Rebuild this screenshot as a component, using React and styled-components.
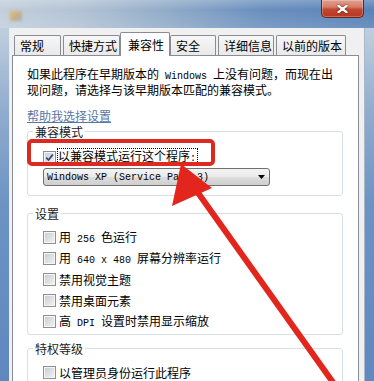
import React from 'react';
import styled, { createGlobalStyle } from 'styled-components';

const GlobalStyle = createGlobalStyle`
  html, body {
    margin: 0;
    padding: 0;
    background: #fff;
  }
  body {
    font-family: "Noto Sans CJK SC", "Noto Sans", sans-serif;
    font-size: 12px;
    color: #000;
  }
`;

const tabs = [
  { label: '常规', width: 47 },
  { label: '快捷方式', width: 57 },
  { label: '兼容性', width: 50, active: true },
  { label: '安全', width: 46 },
  { label: '详细信息', width: 56 },
  { label: '以前的版本', width: 70 },
];

const Screen = styled.div`
  position: relative;
  width: 374px;
  height: 381px;
  overflow: hidden;
  display: flex;
  flex-direction: column;
`;

const TitleBar = styled.div`
  height: 28px;
  flex: none;
  display: flex;
  align-items: flex-start;
  justify-content: space-between;
  background:
    linear-gradient(180deg, rgba(255, 255, 255, 0.22) 0%, rgba(255, 255, 255, 0) 35%, rgba(255, 255, 255, 0.12) 100%),
    linear-gradient(90deg, #c3cfdc 0%, #b2c2d4 22%, #90abc9 45%, #6a8fbd 70%, #5882b7 100%);
`;

const AppIcon = styled.span`
  width: 12px;
  height: 10px;
  margin: 11px 0 0 10px;
  background: linear-gradient(135deg, #e6c06a, #bfae8c 60%, #a2b6cc);
  filter: blur(1.5px);
`;

const CloseButton = styled.div`
  box-sizing: border-box;
  width: 43px;
  height: 18px;
  margin-right: 10px;
  border: 1px solid #6b2418;
  border-top: none;
  border-radius: 0 0 5px 5px;
  background: linear-gradient(180deg, #e2a090 0%, #d57f6c 40%, #c3472f 55%, #b53723 100%);
  box-shadow: inset 0 0 0 1px rgba(255, 255, 255, 0.25);
  display: flex;
  align-items: center;
  justify-content: center;

  svg {
    width: 11px;
    height: 8px;
    filter: drop-shadow(0 0 1px rgba(60, 10, 0, 0.8));
  }
`;

const Body = styled.div`
  flex: 1;
  min-height: 0;
  display: flex;
`;

const Frame = styled.div`
  width: 9px;
  flex: none;
  background: linear-gradient(180deg, #c0cfdf 0%, #93aece 22%, #6c93c3 50%, #5e88bf 100%);
`;

const Dialog = styled.div`
  flex: 1;
  min-width: 0;
  display: flex;
  flex-direction: column;
  background: #f0f0f0;
  border-left: 1px solid #e9eef4;
  border-right: 1px solid #a9b8c9;
  padding: 0 5px 0 2px;
`;

const TabRow = styled.div`
  display: flex;
  align-items: flex-end;
  gap: 2px;
  padding: 4px 0 0 2px;
`;

const Tab = styled.div`
  box-sizing: border-box;
  position: relative;
  z-index: ${(p) => (p.$active ? 1 : 0)};
  width: ${(p) => p.$w}px;
  height: ${(p) => (p.$active ? 24 : 20)}px;
  margin: ${(p) => (p.$active ? '0 -2px -1px' : '0')};
  padding-left: ${(p) => (p.$active ? 7 : 5)}px;
  border: 1px solid #898c95;
  border-bottom: none;
  border-radius: 2px 2px 0 0;
  background: ${(p) => (p.$active ? '#fff' : 'linear-gradient(180deg, #f7f7f7, #e9e9e9)')};
  display: flex;
  align-items: center;
  line-height: 13px;
  white-space: nowrap;
`;

const Panel = styled.div`
  flex: 1;
  background: #fff;
  border: 1px solid #898c95;
  border-bottom: none;
  padding: 11px 15px 0 14px;
`;

const Intro = styled.p`
  margin: 0;
  line-height: 13px;
  white-space: nowrap;
`;

const Mono = styled.span`
  font-family: "Liberation Mono", "DejaVu Sans Mono", monospace;
  font-size: 10px;
  white-space: pre;
`;

const HelpLink = styled.a`
  display: block;
  width: max-content;
  margin-top: 13px;
  line-height: 13px;
  color: #5877a5;
  text-decoration: underline;
`;

const Group = styled.fieldset`
  position: relative;
  min-width: 0;
  margin: ${(p) => p.$top}px 0 0;
  padding: ${(p) => p.$padTop}px 0 ${(p) => p.$padBottom}px 5px;
  border: 1px solid #d5dfe5;
  border-radius: 3px;
`;

const Legend = styled.legend`
  margin: 0;
  padding: 0 2px;
  line-height: 13px;
  color: #1a1a1a;
`;

const GroupBody = styled.div`
  padding-left: 10px;
`;

const CheckRow = styled.div`
  display: flex;
  align-items: center;
  gap: 2px;
  height: ${(p) => p.$h || 21}px;
  line-height: 13px;
  white-space: nowrap;
`;

const Box = styled.span`
  box-sizing: border-box;
  width: 13px;
  height: 13px;
  flex: none;
  border: 1px solid #8e8f8f;
  background: linear-gradient(135deg, #c6cad0 0%, #dfe1e4 55%, #f4f4f4 100%);
  box-shadow: inset 0 0 0 1px #f6f6f6;
  display: flex;
  align-items: center;
  justify-content: center;

  svg {
    width: 9px;
    height: 9px;
  }
`;

const Caption = styled.span`
  border: 1px dotted ${(p) => (p.$focus ? '#000' : 'transparent')};
  padding: 0 1px 0 0;
  margin-left: ${(p) => (p.$focus ? -1 : 0)}px;
`;

const Select = styled.div`
  box-sizing: border-box;
  width: 227px;
  height: 18px;
  margin-top: 3px;
  padding: 0 4px 0 3px;
  border: 1px solid #707070;
  border-radius: 3px;
  background: linear-gradient(180deg, #f3f3f3 0%, #ebebeb 50%, #dddddd 51%, #cfcfcf 100%);
  display: flex;
  align-items: center;
  justify-content: space-between;

  svg {
    width: 7px;
    height: 4px;
  }
`;

const Annotation = styled.svg`
  position: absolute;
  left: 0;
  top: 0;
  width: 374px;
  height: 381px;
  pointer-events: none;
`;

const Check = ({ checked, focus, children }) => (
  <CheckRow $h={focus ? 16 : 21}>
    <Box>
      {checked && (
        <svg viewBox="0 0 9 9">
          <path d="M1.2 4.6 L3.5 7 L7.8 1.6" fill="none" stroke="#2e4a74" strokeWidth="1.7" />
        </svg>
      )}
    </Box>
    <Caption $focus={focus}>{children}</Caption>
  </CheckRow>
);

export default function App() {
  return (
    <Screen>
      <GlobalStyle />
      <TitleBar>
        <AppIcon />
        <CloseButton>
          <svg viewBox="0 0 11 8">
            <path d="M1.5 0.8 L9.5 7.2 M9.5 0.8 L1.5 7.2" stroke="#fff" strokeWidth="2.2" strokeLinecap="round" />
          </svg>
        </CloseButton>
      </TitleBar>
      <Body>
        <Frame />
        <Dialog>
          <TabRow>
            {tabs.map((t) => (
              <Tab key={t.label} $w={t.width} $active={t.active}>
                {t.label}
              </Tab>
            ))}
          </TabRow>
          <Panel>
            <Intro>
              如果此程序在早期版本的<Mono> Windows </Mono>上没有问题，而现在出
              <br />
              现问题，请选择与该早期版本匹配的兼容模式。
            </Intro>
            <HelpLink>帮助我选择设置</HelpLink>

            <Group $top={3} $padTop={11} $padBottom={9}>
              <Legend>兼容模式</Legend>
              <GroupBody>
                <Check checked focus>
                  以兼容模式运行这个程序<Mono>:</Mono>
                </Check>
                <Select>
                  <Mono>Windows XP (Service Pack 3)</Mono>
                  <svg viewBox="0 0 7 4">
                    <polygon points="0,0 7,0 3.5,4" fill="#000" />
                  </svg>
                </Select>
              </GroupBody>
            </Group>

            <Group $top={11} $padTop={7} $padBottom={2}>
              <Legend>设置</Legend>
              <GroupBody>
                <Check>
                  用<Mono> 256 </Mono>色运行
                </Check>
                <Check>
                  用<Mono> 640 x 480 </Mono>屏幕分辨率运行
                </Check>
                <Check>禁用视觉主题</Check>
                <Check>禁用桌面元素</Check>
                <Check>
                  高<Mono> DPI </Mono>设置时禁用显示缩放
                </Check>
              </GroupBody>
            </Group>

            <Group $top={7} $padTop={7} $padBottom={10}>
              <Legend>特权等级</Legend>
              <GroupBody>
                <Check>以管理员身份运行此程序</Check>
              </GroupBody>
            </Group>
          </Panel>
        </Dialog>
        <Frame />
      </Body>

      <Annotation viewBox="0 0 374 381">
        <rect x="29" y="141" width="184" height="23" rx="3" fill="none" stroke="#dc2a22" strokeWidth="4" />
        <line x1="196" y1="190" x2="337" y2="388" stroke="#e3261d" strokeWidth="6" />
        <polygon points="181,164 172,206 212,188" fill="#e3261d" />
      </Annotation>
    </Screen>
  );
}
